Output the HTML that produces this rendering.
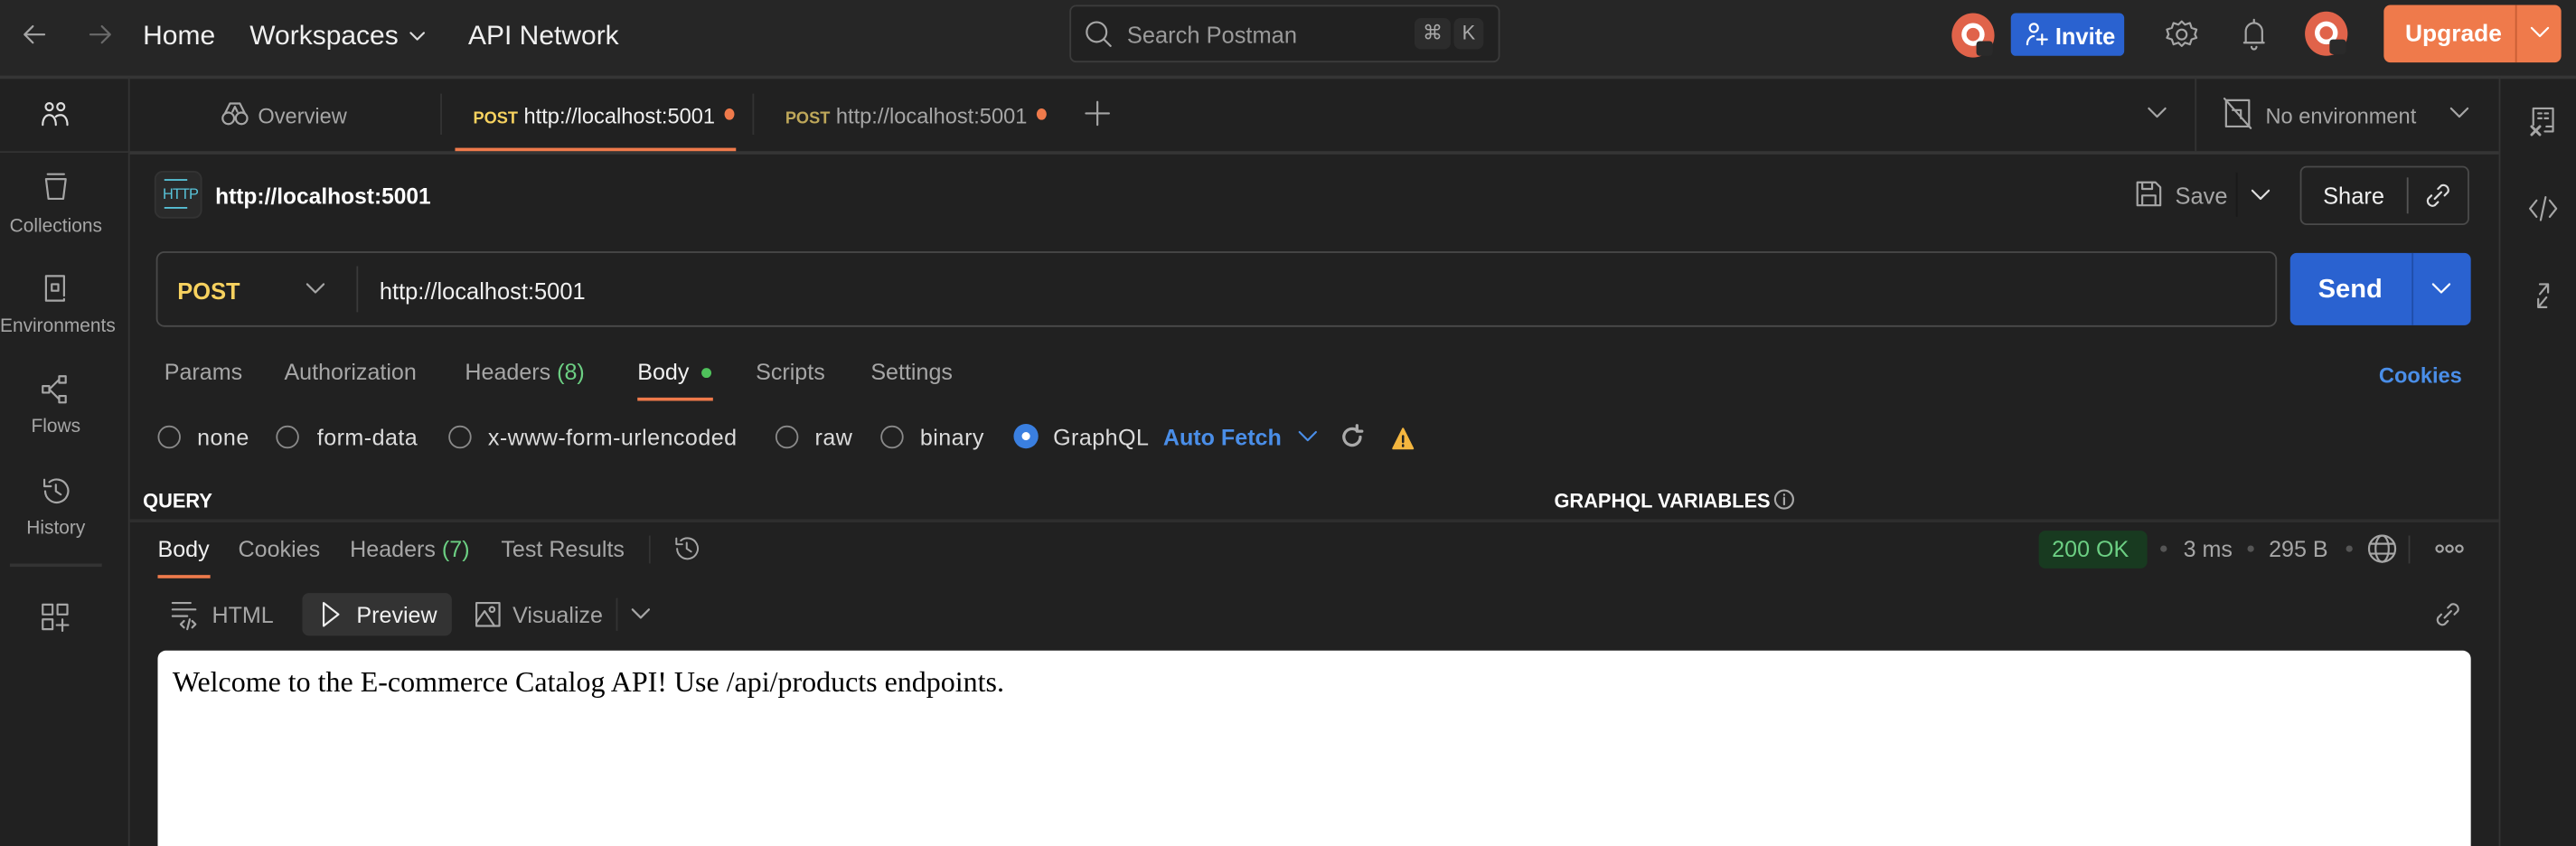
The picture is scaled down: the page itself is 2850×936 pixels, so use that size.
<!DOCTYPE html>
<html><head><meta charset="utf-8">
<style>
html,body{margin:0;padding:0;background:#212121;width:2850px;height:936px;overflow:hidden}
#w{position:absolute;left:0;top:0;width:1568px;height:515px;transform:scale(1.81760);transform-origin:0 0;background:#212121;font-family:"Liberation Sans",sans-serif;color:#e6e6e6;overflow:hidden}
.a{position:absolute;white-space:nowrap}
.x{padding-top:1.5px}
.l{position:absolute;background:#333}
svg{position:absolute;fill:none;stroke:#a6a6a6;stroke-width:1.2;stroke-linecap:round;stroke-linejoin:round}
.t{font-size:13.8px;color:#a6a6a6;padding-top:1.5px}
.rad{position:absolute;width:12px;height:12px;border:1.3px solid #8a8a8a;border-radius:50%}
.rl{font-size:13.8px;color:#dcdcdc;letter-spacing:.25px;padding-top:1.5px}
</style></head><body><div id="w">
<!-- top bar -->
<div class="a" style="left:0;top:0;width:1568px;height:46px;background:#262626"></div>
<div class="l" style="left:0;top:46px;width:1568px;height:1.5px;background:#353535"></div>
<svg style="left:12px;top:12px" width="18" height="18" viewBox="0 0 18 18"><path d="M15 9H3M8 4L3 9l5 5"/></svg>
<svg style="left:52px;top:12px" width="18" height="18" viewBox="0 0 18 18"><path d="M3 9h12M10 4l5 5-5 5" stroke="#6a6a6a"/></svg>
<div class="a x" style="left:87px;top:11px;font-size:16.5px;color:#f0f0f0">Home</div>
<div class="a x" style="left:152px;top:11px;font-size:16.5px;color:#f0f0f0">Workspaces</div>
<svg style="left:248px;top:17px" width="12" height="10" viewBox="0 0 12 10"><path d="M2 3l4 4 4-4" stroke="#ddd"/></svg>
<div class="a x" style="left:285px;top:11px;font-size:16.5px;color:#f0f0f0">API Network</div>
<div class="a" style="left:651px;top:3px;width:262px;height:35px;border:1px solid #3c3c3c;border-radius:4px;background:#212121;box-sizing:border-box"></div>
<svg style="left:659px;top:11px" width="20" height="20" viewBox="0 0 20 20"><circle cx="8.5" cy="8.5" r="6"/><path d="M13 13l4 4"/></svg>
<div class="a x" style="left:686px;top:11px;font-size:14px;color:#9a9a9a">Search Postman</div>
<div class="a" style="left:861px;top:11px;width:22px;height:19px;background:#2c2c2c;border-radius:4px;font-size:12px;color:#aaa;text-align:center;line-height:19px">⌘</div>
<div class="a" style="left:885px;top:11px;width:18px;height:19px;background:#2c2c2c;border-radius:4px;font-size:12px;color:#aaa;text-align:center;line-height:19px">K</div>
<div class="a" style="left:1188px;top:8px;width:26px;height:27px;border-radius:50%;background:#e0634a"><div class="a" style="left:6px;top:6px;width:14px;height:14px;border-radius:50%;background:#fff"></div><div class="a" style="left:9px;top:9px;width:8px;height:8px;border-radius:50%;background:#e0634a"></div><div class="a" style="left:15px;top:17px;width:10px;height:9px;background:#2a2a2a;border-radius:2px"></div></div>
<div class="a" style="left:1224px;top:8px;width:69px;height:26px;background:#2a62d0;border-radius:3px"></div>
<svg style="left:1231px;top:12px" width="18" height="18" viewBox="0 0 18 18"><circle cx="7" cy="5" r="2.5" stroke="#fff"/><path d="M3 15c0-3 2-5 4-5M9 12h6M12 9v6" stroke="#fff"/></svg>
<div class="a x" style="left:1251px;top:12px;font-size:14px;color:#fff;font-weight:bold">Invite</div>
<svg style="left:1318px;top:10px" width="20" height="22" viewBox="0 0 20 22"><circle cx="10" cy="11" r="3"/><path d="M10 3l2 2 3-1 1 3 3 1-1 3 1 2-3 1-1 3-3-1-2 2-2-2-3 1-1-3-3-1 1-2-1-3 3-1 1-3 3 1z"/></svg>
<svg style="left:1363px;top:10px" width="18" height="22" viewBox="0 0 18 22"><path d="M4 16V9a5 5 0 0110 0v7zM3 16h12M9 2v2M7.5 18.5a1.5 1.5 0 003 0"/></svg>
<div class="a" style="left:1403px;top:7px;width:26px;height:27px;border-radius:50%;background:#e0634a"><div class="a" style="left:6px;top:6px;width:14px;height:14px;border-radius:50%;background:#fff"></div><div class="a" style="left:9px;top:9px;width:8px;height:8px;border-radius:50%;background:#e0634a"></div><div class="a" style="left:15px;top:17px;width:10px;height:9px;background:#2a2a2a;border-radius:2px"></div></div>
<div class="a" style="left:1451px;top:3px;width:108px;height:35px;background:#ef7a4b;border-radius:4px"></div>
<div class="l" style="left:1531px;top:3px;width:1px;height:35px;background:#c85f35"></div>
<div class="a x" style="left:1464px;top:11px;font-size:14.5px;color:#fff;font-weight:bold">Upgrade</div>
<svg style="left:1539px;top:15px" width="14" height="10" viewBox="0 0 14 10"><path d="M2 2l5 5 5-5" stroke="#fff"/></svg>
<!-- left sidebar -->
<div class="l" style="left:78px;top:47px;width:1px;height:468px"></div>
<svg style="left:24px;top:60px" width="20" height="20" viewBox="0 0 20 20"><circle cx="6" cy="5" r="2.2" stroke="#ddd"/><circle cx="13" cy="5" r="2.2" stroke="#ddd"/><path d="M2 16c0-4 2-6 4-6s4 2 4 6M10 11c1-1 2-1 3-1 2 0 4 2 4 6" stroke="#ddd"/></svg>
<div class="l" style="left:0;top:92px;width:78px;height:1px"></div>
<svg style="left:24px;top:104px" width="20" height="20" viewBox="0 0 20 20"><path d="M5 2h10M4 5h12l-1.5 12h-9z"/></svg>
<div class="a x" style="left:0;top:130px;width:68px;text-align:center;font-size:11.5px;color:#a6a6a6">Collections</div>
<svg style="left:24px;top:166px" width="20" height="20" viewBox="0 0 20 20"><path d="M15 17H4V2h11v12M15 16v1"/><rect x="7.5" y="7" width="4" height="4"/></svg>
<div class="a x" style="left:0;top:191px;width:68px;text-align:center;font-size:11.5px;color:#a6a6a6">Environments</div>
<svg style="left:24px;top:227px" width="20" height="20" viewBox="0 0 20 20"><rect x="2" y="8" width="4" height="4"/><rect x="12" y="2" width="4" height="4"/><rect x="12" y="14" width="4" height="4"/><path d="M6 10l6-6M6 10l6 6"/></svg>
<div class="a x" style="left:0;top:252px;width:68px;text-align:center;font-size:11.5px;color:#a6a6a6">Flows</div>
<svg style="left:24px;top:289px" width="20" height="20" viewBox="0 0 20 20"><path d="M3.5 10A7 7 0 1 0 6 4.5M3 3v4h4M10 6v4l3 2"/></svg>
<div class="a x" style="left:0;top:314px;width:68px;text-align:center;font-size:11.5px;color:#a6a6a6">History</div>
<div class="l" style="left:6px;top:343px;width:56px;height:1.5px"></div>
<svg style="left:24px;top:366px" width="20" height="20" viewBox="0 0 20 20"><rect x="2" y="2" width="6" height="6"/><rect x="11" y="2" width="6" height="6"/><rect x="2" y="11" width="6" height="6"/><path d="M14 11v7M10.5 14.5h7"/></svg>
<!-- right sidebar -->
<div class="l" style="left:1521px;top:47px;width:1px;height:468px"></div>
<svg style="left:1538px;top:63px" width="20" height="20" viewBox="0 0 20 20"><path d="M4 13V3h12v14h-5M7 6h2M11 6h2M7 9h2M11 9h2M12 14h3"/><path d="M3 14l5 5M8 14l-5 5" stroke-width="1.6"/></svg>
<svg style="left:1538px;top:117px" width="20" height="20" viewBox="0 0 20 20"><path d="M6 5l-4 5 4 5M14 5l4 5-4 5M11.5 3l-3 14"/></svg>
<svg style="left:1538px;top:170px" width="20" height="20" viewBox="0 0 20 20"><path d="M8 3h5v5M13 3L8 9M12 17H7v-5M7 17l5-6"/></svg>
<!-- tab row -->
<div class="l" style="left:79px;top:92px;width:1442px;height:1.5px;background:#353535"></div>
<svg style="left:134px;top:61px" width="18" height="16" viewBox="0 0 18 16"><circle cx="5" cy="11" r="3.5"/><circle cx="13" cy="11" r="3.5"/><path d="M3 8l3-6h6l3 6M7.5 7l1.5-3 1.5 3"/></svg>
<div class="a x" style="left:157px;top:61px;font-size:13px;color:#a6a6a6">Overview</div>
<div class="l" style="left:268px;top:57px;width:1px;height:25px"></div>
<div class="a x" style="left:288px;top:61px;font-size:13px;color:#f0f0f0"><span style="color:#f7d25f;font-size:10px;font-weight:bold">POST</span> http://localhost:5001</div>
<div class="a" style="left:441px;top:66px;width:6px;height:7px;border-radius:50%;background:#ef7a4b"></div>
<div class="a" style="left:277px;top:90px;width:171px;height:2px;background:#ef7a4b"></div>
<div class="l" style="left:458px;top:57px;width:1px;height:25px"></div>
<div class="a x" style="left:478px;top:61px;font-size:13px;color:#a6a6a6"><span style="color:#bfa85a;font-size:10px;font-weight:bold">POST</span> http://localhost:5001</div>
<div class="a" style="left:631px;top:66px;width:6px;height:7px;border-radius:50%;background:#ef7a4b"></div>
<svg style="left:660px;top:61px" width="16" height="16" viewBox="0 0 16 16"><path d="M8 1v14M1 8h14"/></svg>
<svg style="left:1307px;top:64px" width="12" height="10" viewBox="0 0 12 10"><path d="M1 2l5 5 5-5"/></svg>
<div class="l" style="left:1336px;top:47px;width:1px;height:45px"></div>
<svg style="left:1353px;top:59px" width="18" height="20" viewBox="0 0 18 20"><path d="M2 2h14v16H2zM1 1l16 18M6 8h5v5"/></svg>
<div class="a x" style="left:1379px;top:61px;font-size:13px;color:#a6a6a6">No environment</div>
<svg style="left:1491px;top:64px" width="12" height="10" viewBox="0 0 12 10"><path d="M1 2l5 5 5-5"/></svg>
<!-- title row -->
<div class="a" style="left:94px;top:104px;width:29px;height:29px;border-radius:5px;background:#2a2a2a;border:1px solid #333;box-sizing:border-box"></div>
<div class="a" style="left:99px;top:113px;font-size:9px;color:#58c4da;letter-spacing:-0.5px">HTTP</div>
<div class="l" style="left:100px;top:109px;width:14px;height:1px;background:#58c4da"></div>
<div class="l" style="left:100px;top:126px;width:14px;height:1px;background:#58c4da"></div>
<div class="a x" style="left:131px;top:110px;font-size:13.5px;color:#fff;font-weight:bold">http://localhost:5001</div>
<svg style="left:1299px;top:109px" width="18" height="18" viewBox="0 0 18 18"><path d="M2 2h11l3 3v11H2zM5 2v4h6V2M5 16v-6h8v6"/></svg>
<div class="a x" style="left:1324px;top:109px;font-size:14px;color:#a6a6a6">Save</div>
<div class="l" style="left:1361px;top:105px;width:1px;height:27px;background:#1a1a1a"></div>
<svg style="left:1370px;top:114px" width="12" height="10" viewBox="0 0 12 10"><path d="M1 2l5 5 5-5" stroke="#ddd"/></svg>
<div class="a" style="left:1400px;top:101px;width:103px;height:36px;border:1px solid #4a4a4a;border-radius:4px;box-sizing:border-box"></div>
<div class="a x" style="left:1414px;top:109px;font-size:14px;color:#f0f0f0">Share</div>
<div class="l" style="left:1465px;top:108px;width:1px;height:22px;background:#555"></div>
<svg style="left:1474px;top:109px" width="20" height="20" viewBox="0 0 20 20"><path d="M8 12l4-4M10 6l2-2a3 3 0 014 4l-2 2M10 14l-2 2a3 3 0 01-4-4l2-2" stroke="#ddd"/></svg>
<!-- url bar -->
<div class="a" style="left:95px;top:153px;width:1291px;height:46px;border:1px solid #4a4a4a;border-radius:5px;box-sizing:border-box"></div>
<div class="a x" style="left:108px;top:167px;font-size:14px;color:#f7d25f;font-weight:bold">POST</div>
<svg style="left:186px;top:171px" width="12" height="10" viewBox="0 0 12 10"><path d="M1 2l5 5 5-5"/></svg>
<div class="l" style="left:217px;top:162px;width:1px;height:28px;background:#3a3a3a"></div>
<div class="a x" style="left:231px;top:167px;font-size:14px;color:#f0f0f0">http://localhost:5001</div>
<div class="a" style="left:1394px;top:154px;width:110px;height:44px;background:#2a62d0;border-radius:4px"></div>
<div class="l" style="left:1468px;top:154px;width:1px;height:44px;background:#1f4ea8"></div>
<div class="a x" style="left:1411px;top:166px;font-size:16px;color:#fff;font-weight:bold">Send</div>
<svg style="left:1480px;top:171px" width="12" height="10" viewBox="0 0 12 10"><path d="M1 2l5 5 5-5" stroke="#fff"/></svg>
<!-- request tabs -->
<div class="a t" style="left:100px;top:217px">Params</div>
<div class="a t" style="left:173px;top:217px">Authorization</div>
<div class="a t" style="left:283px;top:217px">Headers <span style="color:#6ccf83">(8)</span></div>
<div class="a t" style="left:388px;top:217px;color:#f0f0f0">Body</div>
<div class="a" style="left:427px;top:224px;width:6px;height:6px;border-radius:50%;background:#4fc25b"></div>
<div class="a" style="left:388px;top:242px;width:46px;height:2px;background:#ef7a4b"></div>
<div class="a t" style="left:460px;top:217px">Scripts</div>
<div class="a t" style="left:530px;top:217px">Settings</div>
<div class="a x" style="left:1448px;top:219px;font-size:13px;color:#4a8ee8;font-weight:bold">Cookies</div>
<!-- radios -->
<div class="rad" style="left:96px;top:259px"></div><div class="a rl" style="left:120px;top:257px">none</div>
<div class="rad" style="left:168px;top:259px"></div><div class="a rl" style="left:193px;top:257px">form-data</div>
<div class="rad" style="left:273px;top:259px"></div><div class="a rl" style="left:297px;top:257px">x-www-form-urlencoded</div>
<div class="rad" style="left:472px;top:259px"></div><div class="a rl" style="left:496px;top:257px">raw</div>
<div class="rad" style="left:536px;top:259px"></div><div class="a rl" style="left:560px;top:257px">binary</div>
<div class="a" style="left:617px;top:258px;width:15px;height:15px;border-radius:50%;background:#3a7fe0"></div>
<div class="a" style="left:622px;top:263px;width:5px;height:5px;border-radius:50%;background:#fff"></div>
<div class="a rl" style="left:641px;top:257px">GraphQL</div>
<div class="a x" style="left:708px;top:257px;font-size:13.8px;color:#4a8ee8;font-weight:bold">Auto Fetch</div>
<svg style="left:790px;top:261px" width="12" height="10" viewBox="0 0 12 10"><path d="M1 2l5 5 5-5" stroke="#4a8ee8"/></svg>
<svg style="left:815px;top:258px" width="16" height="16" viewBox="0 0 16 16"><path d="M13 8a5 5 0 11-2-4M11 1v3.5h3" stroke="#aaa" stroke-width="1.8"/></svg>
<svg style="left:847px;top:260px" width="14" height="14" viewBox="0 0 14 14"><path d="M7 1L13 13H1z" fill="#f4b63f" stroke="#f4b63f"/><path d="M7 5.5v3.5M7 11v.5" stroke="#222" stroke-width="1.4"/></svg>
<div class="a x" style="left:87px;top:296px;font-size:12px;color:#fff;font-weight:bold">QUERY</div>
<div class="a x" style="left:946px;top:296px;font-size:12px;color:#fff;font-weight:bold">GRAPHQL VARIABLES</div>
<svg style="left:1079px;top:297px" width="14" height="14" viewBox="0 0 14 14"><circle cx="7" cy="7" r="5.5"/><path d="M7 6v4M7 4v.3"/></svg>
<div class="l" style="left:79px;top:316px;width:1442px;height:1.5px;background:#2e2e2e"></div>
<!-- response tabs -->
<div class="a t" style="left:96px;top:325px;color:#f0f0f0">Body</div>
<div class="a" style="left:96px;top:350px;width:32px;height:2px;background:#ef7a4b"></div>
<div class="a t" style="left:145px;top:325px">Cookies</div>
<div class="a t" style="left:213px;top:325px">Headers <span style="color:#6ccf83">(7)</span></div>
<div class="a t" style="left:305px;top:325px">Test Results</div>
<div class="l" style="left:395px;top:326px;width:1px;height:17px"></div>
<svg style="left:409px;top:325px" width="18" height="18" viewBox="0 0 20 20"><path d="M3.5 10A7 7 0 1 0 6 4.5M3 3v4h4M10 6v4l3 2"/></svg>
<div class="a" style="left:1241px;top:323px;width:66px;height:23px;background:#183a20;border-radius:4px"></div>
<div class="a t" style="left:1249px;top:325px;color:#6ccf83">200 OK</div>
<div class="a" style="left:1315px;top:332px;width:4px;height:4px;border-radius:50%;background:#555"></div>
<div class="a t" style="left:1329px;top:325px">3 ms</div>
<div class="a" style="left:1368px;top:332px;width:4px;height:4px;border-radius:50%;background:#555"></div>
<div class="a t" style="left:1381px;top:325px">295 B</div>
<div class="a" style="left:1428px;top:332px;width:4px;height:4px;border-radius:50%;background:#555"></div>
<svg style="left:1440px;top:324px" width="20" height="20" viewBox="0 0 20 20"><circle cx="10" cy="10" r="8"/><ellipse cx="10" cy="10" rx="4" ry="8"/><path d="M2.5 7h15M2.5 13h15"/></svg>
<div class="l" style="left:1466px;top:326px;width:1px;height:17px;background:#3a3a3a"></div>
<svg style="left:1482px;top:330px" width="18" height="8" viewBox="0 0 18 8"><circle cx="3" cy="4" r="2"/><circle cx="9" cy="4" r="2"/><circle cx="15" cy="4" r="2"/></svg>
<!-- view row -->
<svg style="left:103px;top:364px" width="20" height="20" viewBox="0 0 20 20"><path d="M2 3h11M2 7h14M2 11h9M9 14l-2 2 2 2M14 14l2 2-2 2M12.5 13l-1.5 6"/></svg>
<div class="a t" style="left:129px;top:365px">HTML</div>
<div class="a" style="left:184px;top:361px;width:91px;height:26px;background:#333;border-radius:4px"></div>
<svg style="left:194px;top:365px" width="14" height="18" viewBox="0 0 14 18"><path d="M3 2l9 7-9 7z" stroke="#eee"/></svg>
<div class="a t" style="left:217px;top:365px;color:#f0f0f0">Preview</div>
<svg style="left:288px;top:365px" width="18" height="18" viewBox="0 0 18 18"><rect x="2" y="2" width="14" height="14"/><circle cx="11.5" cy="6" r="1.5"/><path d="M2 14l5-7 6 9"/></svg>
<div class="a t" style="left:312px;top:365px">Visualize</div>
<div class="l" style="left:375px;top:364px;width:1px;height:20px"></div>
<svg style="left:384px;top:369px" width="12" height="10" viewBox="0 0 12 10"><path d="M1 2l5 5 5-5"/></svg>
<svg style="left:1480px;top:364px" width="20" height="20" viewBox="0 0 20 20"><path d="M8 12l4-4M10 6l2-2a3 3 0 014 4l-2 2M10 14l-2 2a3 3 0 01-4-4l2-2"/></svg>
<!-- preview -->
<div class="a" style="left:96px;top:396px;width:1408px;height:140px;background:#fff;border-radius:5px 5px 0 0"></div>
<div class="a" style="left:105px;top:405px;font-family:'Liberation Serif',serif;font-size:17.6px;color:#000">Welcome to the E-commerce Catalog API! Use /api/products endpoints.</div>
</div></body></html>
